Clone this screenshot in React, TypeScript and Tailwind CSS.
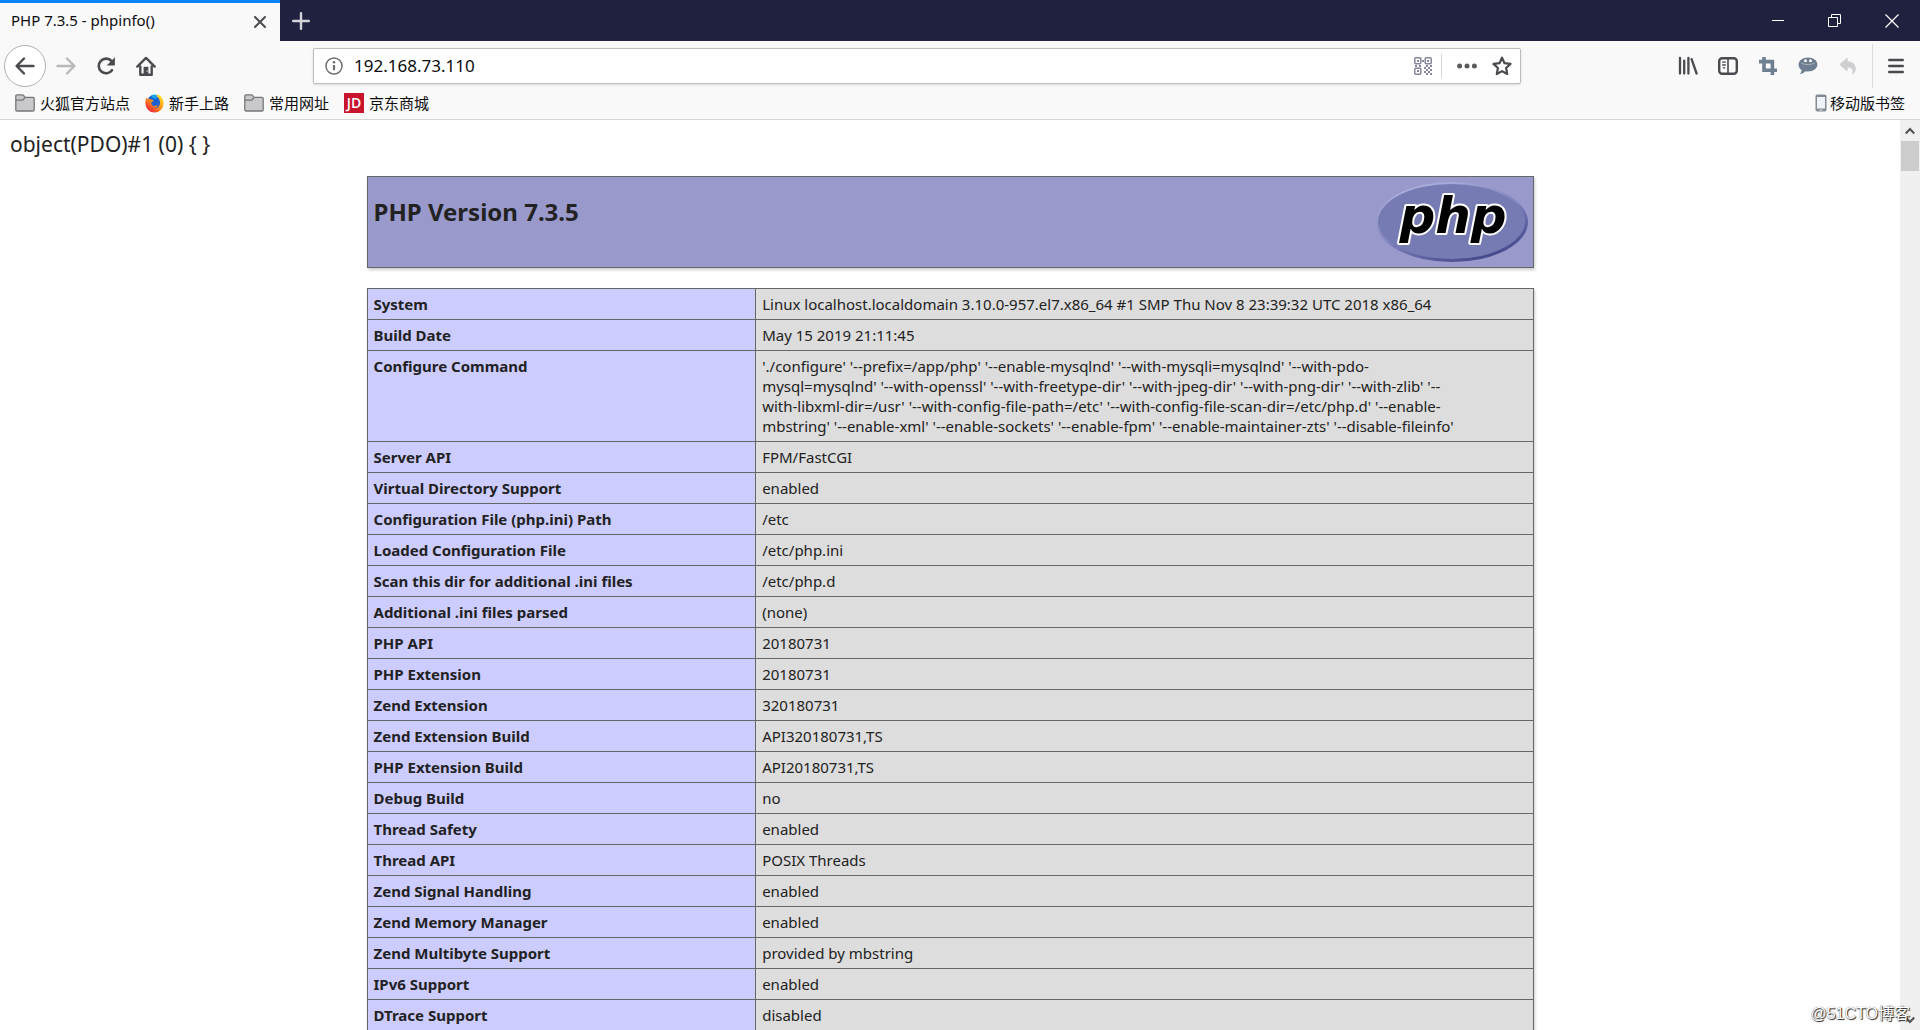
import type { ReactNode } from "react"

type InfoRow = {
  readonly name: string
  readonly value: string
}

const configureCommand = [
  "'./configure' '--prefix=/app/php' '--enable-mysqlnd' '--with-mysqli=mysqlnd' '--with-pdo-",
  "mysql=mysqlnd' '--with-openssl' '--with-freetype-dir' '--with-jpeg-dir' '--with-png-dir' '--with-zlib' '--",
  "with-libxml-dir=/usr' '--with-config-file-path=/etc' '--with-config-file-scan-dir=/etc/php.d' '--enable-",
  "mbstring' '--enable-xml' '--enable-sockets' '--enable-fpm' '--enable-maintainer-zts' '--disable-fileinfo'",
].join("\n")

const infoRows: readonly InfoRow[] = [
  {
    name: "System",
    value: "Linux localhost.localdomain 3.10.0-957.el7.x86_64 #1 SMP Thu Nov 8 23:39:32 UTC 2018 x86_64",
  },
  { name: "Build Date", value: "May 15 2019 21:11:45" },
  { name: "Configure Command", value: configureCommand },
  { name: "Server API", value: "FPM/FastCGI" },
  { name: "Virtual Directory Support", value: "enabled" },
  { name: "Configuration File (php.ini) Path", value: "/etc" },
  { name: "Loaded Configuration File", value: "/etc/php.ini" },
  { name: "Scan this dir for additional .ini files", value: "/etc/php.d" },
  { name: "Additional .ini files parsed", value: "(none)" },
  { name: "PHP API", value: "20180731" },
  { name: "PHP Extension", value: "20180731" },
  { name: "Zend Extension", value: "320180731" },
  { name: "Zend Extension Build", value: "API320180731,TS" },
  { name: "PHP Extension Build", value: "API20180731,TS" },
  { name: "Debug Build", value: "no" },
  { name: "Thread Safety", value: "enabled" },
  { name: "Thread API", value: "POSIX Threads" },
  { name: "Zend Signal Handling", value: "enabled" },
  { name: "Zend Memory Manager", value: "enabled" },
  { name: "Zend Multibyte Support", value: "provided by mbstring" },
  { name: "IPv6 Support", value: "enabled" },
  { name: "DTrace Support", value: "disabled" },
]

type IconButtonProps = {
  readonly label: string
  readonly className?: string
  readonly children: ReactNode
}

function IconButton({ label, className = "w-10", children }: IconButtonProps) {
  return (
    <button
      type="button"
      aria-label={label}
      className={`flex h-10 shrink-0 items-center justify-center ${className}`}
    >
      {children}
    </button>
  )
}

function BackIcon() {
  return (
    <svg width="20" height="20" viewBox="0 0 20 20" fill="none" stroke="currentColor" strokeWidth="2.4" strokeLinecap="round" strokeLinejoin="round">
      <path d="M18.5 10H2M9 2.5 1.6 10 9 17.5" />
    </svg>
  )
}

function ForwardIcon() {
  return (
    <svg width="20" height="20" viewBox="0 0 20 20" fill="none" stroke="currentColor" strokeWidth="2.4" strokeLinecap="round" strokeLinejoin="round">
      <path d="M1.5 10H18M11 2.5 18.4 10 11 17.5" />
    </svg>
  )
}

function ReloadIcon() {
  return (
    <svg width="20" height="20" viewBox="0 0 20 20" fill="none" stroke="currentColor" strokeWidth="2.6" strokeLinecap="round">
      <path d="M15.6 5.2A7.3 7.3 0 1 0 16 14.2" />
      <path d="M18.9 1.2v7.6a.6.6 0 0 1-.6.6h-7.6z" fill="currentColor" stroke="none" />
    </svg>
  )
}

function HomeIcon() {
  return (
    <svg width="20" height="20" viewBox="0 0 20 20" fill="none" stroke="currentColor" strokeLinecap="round" strokeLinejoin="round">
      <path d="M1.3 10.6 10 1.9l8.7 8.7" strokeWidth="2.4" />
      <path d="M4.3 10.5v8.2h11.4v-8.2" strokeWidth="2.4" />
      <path d="M7.6 18.5v-7.7h4.8v7.7z" fill="currentColor" stroke="none" />
      <path d="M11 15h.4" stroke="#f9f9fa" strokeWidth="1.2" />
    </svg>
  )
}

function InfoIcon() {
  return (
    <svg width="18" height="18" viewBox="0 0 18 18" fill="none" stroke="currentColor">
      <circle cx="9" cy="9" r="8" strokeWidth="1.5" />
      <path d="M9 8v5.2" strokeWidth="2.2" />
      <circle cx="9" cy="5.2" r="1.3" fill="currentColor" stroke="none" />
    </svg>
  )
}

function QrIcon() {
  return (
    <svg width="18" height="18" viewBox="0 0 18 18" fill="currentColor">
      <g fill="none" stroke="currentColor" strokeWidth="1.5">
        <rect x=".8" y=".8" width="6" height="6" rx="1" />
        <rect x="11.2" y=".8" width="6" height="6" rx="1" />
        <rect x=".8" y="11.2" width="6" height="6" rx="1" />
      </g>
      <path d="M3 3h2v2H3zM13 3h2v2h-2zM3 13h2v2H3zM8 3h2v2H8zM1 8h2v2H1zM5 8h2v2H5zM10 10h2v2h-2zM12 8h2v2h-2zM16 8h2v2h-2zM14 10h2v2h-2zM12 12h2v2h-2zM16 12h2v2h-2zM10 14h2v2h-2zM14 14h2v2h-2zM12 16h2v2h-2zM16 16h2v2h-2z" />
    </svg>
  )
}

function DotsIcon() {
  return (
    <svg width="20" height="6" viewBox="0 0 20 6" fill="currentColor">
      <circle cx="2.6" cy="3" r="2.5" />
      <circle cx="10" cy="3" r="2.5" />
      <circle cx="17.4" cy="3" r="2.5" />
    </svg>
  )
}

function StarIcon() {
  return (
    <svg width="20" height="20" viewBox="0 0 20 20" fill="none" stroke="currentColor" strokeWidth="2.2" strokeLinejoin="round">
      <path d="M10 1.7l2.5 5.5 6 .7-4.4 4.1 1.1 6-5.2-2.9L4.8 18l1.1-6L1.5 7.9l6-.7z" />
    </svg>
  )
}

function LibraryIcon() {
  return (
    <svg width="20" height="20" viewBox="0 0 20 20" fill="none" stroke="currentColor" strokeWidth="2.3" strokeLinecap="round">
      <path d="M2 2v15.500M6.200 4.600v12.900M10.400 2v15.500M13.600 3.200 18.600 17.500" />
    </svg>
  )
}

function SidebarIcon() {
  return (
    <svg width="20" height="18" viewBox="0 0 20 18" fill="none" stroke="currentColor">
      <rect x="1.200" y="1.200" width="17.600" height="15.600" rx="3" strokeWidth="2.400" />
      <path d="M10 2v14" strokeWidth="1.600" />
      <path d="M4.200 5.200h3.600M4.200 8h3.600M4.800 10.800h2.400" strokeWidth="1.300" />
    </svg>
  )
}

function CropIcon() {
  return (
    <svg width="18" height="18" viewBox="0 0 18 18" fill="none" stroke="currentColor" strokeWidth="3.600">
      <path d="M5 0v13.200H18M0 4.600h13.400V18" />
    </svg>
  )
}

function ChatIcon() {
  return (
    <svg width="20" height="18" viewBox="0 0 20 18">
      <path
        d="M10 .6c5.300 0 9.400 3 9.400 7s-4.100 7-9.400 7c-.9 0-1.800-.1-2.600-.3-1.500 1.600-3.400 2.700-5.600 2.900 1.100-1.100 1.700-2.500 1.800-4.100C1.700 11.900.6 9.900.6 7.600c0-4 4.100-7 9.400-7z"
        fill="currentColor"
      />
      <circle cx="7.500" cy="3.800" r="1.500" fill="#f9f9fa" />
      <circle cx="12.500" cy="3.800" r="1.500" fill="#f9f9fa" />
      <path d="M3.500 6.200c3.500 2 9.500 2 13 0" stroke="#a7b1bd" fill="none" />
    </svg>
  )
}

function UndoIcon() {
  return (
    <svg width="18" height="18" viewBox="0 0 18 18" fill="currentColor">
      <path d="M7.800.9c.4-.3.800-.1.800.4v3c5.400.4 8.200 3.400 8.200 7.300 0 2.600-1.200 4.600-3.200 5.700-.500.300-.900-.1-.600-.6 1.800-3.400.3-6-4.400-6.200v3c0 .5-.4.700-.8.400L.800 8.100c-.4-.300-.4-.700 0-1z" />
    </svg>
  )
}

function MenuIcon() {
  return (
    <svg width="16" height="16" viewBox="0 0 16 16" stroke="currentColor" strokeWidth="2.400" strokeLinecap="round">
      <path d="M1.200 2h13.600M1.200 8h13.600M1.200 14h13.600" />
    </svg>
  )
}

function FolderIcon() {
  return (
    <svg width="20" height="18" viewBox="0 0 20 18" fill="#c9c9cb" stroke="#77777a" strokeWidth="1.300" strokeLinejoin="round">
      <path d="M.8 15.800V2c0-.7.500-1.200 1.200-1.200h5.300c.5 0 .9.200 1.200.6L10 3.400h8c.700 0 1.200.5 1.200 1.200v11.200c0 .700-.5 1.200-1.200 1.200H2c-.700 0-1.200-.5-1.200-1.200z" />
      <path d="M1 6.200h6.600L10 3.600" fill="none" />
    </svg>
  )
}

function FirefoxIcon() {
  return (
    <svg width="19" height="19" viewBox="0 0 19 19">
      <defs>
        <linearGradient id="fox-flame" x1="0.850" y1="0.100" x2="0.200" y2="0.950">
          <stop offset="0" stopColor="#ffe226" />
          <stop offset="0.450" stopColor="#ff9a16" />
          <stop offset="1" stopColor="#f0203c" />
        </linearGradient>
      </defs>
      <circle cx="9.300" cy="8.200" r="7.200" fill="#1b5fd0" />
      <path d="M6 1.500a7 7 0 0 1 7.500.6L11 5 7.500 4z" fill="#15a4e8" />
      <path
        d="M1.400 3.200c.2.800.6 1.300 1.100 1.700 1.300-.5 2.500-.3 3.500.5 1.200 0 2.300.6 2.600 1.300-.5.800-1.300 1-2.100 1.300-.5 1.700.2 3.300 1.800 3.900 1.700.5 2.700-.8 4.400-.2-.8 1.500-2.400 2.200-4 2.200 3.500 1 6.300-1.500 6.300-5.100 0-2.600-1.300-4.700-2.900-6.200C11.600 1.800 12 .9 12.400.2c3.700 1.500 6.200 4.900 6.200 9A9.100 9.100 0 0 1 .400 9.500c0-2.300.3-4.600 1-6.300z"
        fill="url(#fox-flame)"
      />
    </svg>
  )
}

function JdIcon() {
  return (
    <span className="flex h-5 w-5 items-center justify-center bg-[#c8142c] font-['Open_Sans',sans-serif] text-[14px] leading-5 font-semibold text-white">
      JD
    </span>
  )
}

function PhoneIcon() {
  return (
    <svg width="12" height="18" viewBox="0 0 12 18">
      <rect x=".5" y=".5" width="11" height="17" rx="1.800" fill="#858b94" />
      <rect x="2" y="3" width="8" height="11.500" fill="#eef3f9" />
      <path d="M4.500 16.100h3" stroke="#d5dae0" />
    </svg>
  )
}

function PhpLogo() {
  return (
    <svg width="152" height="80" viewBox="0 0 152 80" role="img" aria-label="PHP logo" className="shrink-0">
      <defs>
        <linearGradient id="php-rim" x1="0.200" y1="0" x2="0.800" y2="1">
          <stop offset="0" stopColor="#b4b6e0" />
          <stop offset="0.500" stopColor="#8083bd" />
          <stop offset="1" stopColor="#3c3f83" />
        </linearGradient>
      </defs>
      <ellipse cx="76" cy="40" rx="76" ry="40" fill="url(#php-rim)" />
      <ellipse cx="75.500" cy="39.500" rx="73.500" ry="37.500" fill="#777bb3" />
      <text
        x="77"
        y="51"
        textAnchor="middle"
        fill="#000"
        stroke="#fff"
        strokeWidth="4"
        strokeLinejoin="round"
        paintOrder="stroke"
        className="font-['DejaVu_Sans',sans-serif] text-[50px] font-bold italic"
      >
        php
      </text>
    </svg>
  )
}

function TitleBar() {
  return (
    <header className="flex h-[41px] shrink-0 items-stretch bg-[#20213f]">
      <div className="flex w-[280px] items-center justify-between border-t-3 border-[#0a84ff] bg-[#f9f9fa] pr-2 pb-1 pl-[11px]">
        <span className="text-[15px] leading-5 text-[#0c0c0d]">PHP 7.3.5 - phpinfo()</span>
        <button type="button" aria-label="Close tab" className="mt-1 flex h-6 w-6 items-center justify-center text-[#4a4a4f]">
          <svg width="12" height="12" viewBox="0 0 12 12" stroke="currentColor" strokeWidth="2" strokeLinecap="round">
            <path d="M1 1l10 10M11 1 1 11" />
          </svg>
        </button>
      </div>
      <button type="button" aria-label="New tab" className="flex w-[42px] items-center justify-center text-[#d3d3dc]">
        <svg width="18" height="18" viewBox="0 0 18 18" stroke="currentColor" strokeWidth="2.400" strokeLinecap="round">
          <path d="M9 1.200v15.600M1.200 9h15.600" />
        </svg>
      </button>
      <div className="ml-auto flex text-white">
        <button type="button" aria-label="Minimize" className="flex w-[57px] items-center justify-center">
          <svg width="12" height="12" viewBox="0 0 12 12" stroke="currentColor">
            <path d="M0 5.500h12" />
          </svg>
        </button>
        <button type="button" aria-label="Restore" className="flex w-[57px] items-center justify-center">
          <svg width="13" height="13" viewBox="0 0 13 13" fill="none" stroke="currentColor">
            <path d="M.500 3.500h9v9h-9zM3.500 3.500v-3h9v9h-3" />
          </svg>
        </button>
        <button type="button" aria-label="Close" className="flex w-[57px] items-center justify-center">
          <svg width="14" height="14" viewBox="0 0 14 14" stroke="currentColor" strokeWidth="1.200">
            <path d="M.5.500l13 13M13.500.500l-13 13" />
          </svg>
        </button>
      </div>
    </header>
  )
}

function NavBar() {
  return (
    <nav aria-label="Navigation" className="flex h-[50px] shrink-0 items-center pr-1 pl-1 text-[#4a4a4f]">
      <button
        type="button"
        aria-label="Back"
        className="flex h-[42px] w-[42px] shrink-0 items-center justify-center rounded-full border border-[#b1b1b3] bg-white"
      >
        <BackIcon />
      </button>
      <IconButton label="Forward" className="w-10 text-[#b9b9bb]">
        <ForwardIcon />
      </IconButton>
      <IconButton label="Reload">
        <ReloadIcon />
      </IconButton>
      <IconButton label="Home">
        <HomeIcon />
      </IconButton>

      <div className="flex flex-1 px-[147px]">
        <div className="flex h-9 flex-1 items-center rounded-xs border border-[#bdbdbf] bg-white shadow-sm">
          <button type="button" aria-label="Site information" className="flex w-10 items-center justify-center text-[#6f6f72]">
            <InfoIcon />
          </button>
          <input
            type="text"
            aria-label="Address"
            defaultValue="192.168.73.110"
            className="min-w-0 flex-1 bg-transparent text-[17px] leading-6 text-[#0c0c0d] outline-none"
          />
          <IconButton label="QR code" className="w-9 text-[#85869c]">
            <QrIcon />
          </IconButton>
          <span className="h-6 w-px bg-[#d7d7db]" />
          <IconButton label="Page actions" className="ml-2 w-[34px] text-[#5a5a5e]">
            <DotsIcon />
          </IconButton>
          <IconButton label="Bookmark this page" className="w-9 text-[#4a4a4f]">
            <StarIcon />
          </IconButton>
        </div>
      </div>

      <IconButton label="Library">
        <LibraryIcon />
      </IconButton>
      <IconButton label="Sidebars">
        <SidebarIcon />
      </IconButton>
      <IconButton label="Screenshot" className="w-10 text-[#6d7f90]">
        <CropIcon />
      </IconButton>
      <IconButton label="Chat" className="w-10 text-[#6d7f90]">
        <ChatIcon />
      </IconButton>
      <IconButton label="Undo close tab" className="w-10 text-[#cfcfd2]">
        <UndoIcon />
      </IconButton>
      <span className="mr-[3px] ml-1 h-11 w-px shrink-0 bg-[#dcdcde]" />
      <IconButton label="Menu">
        <MenuIcon />
      </IconButton>
    </nav>
  )
}

type BookmarkProps = {
  readonly icon: ReactNode
  readonly label: string
}

function Bookmark({ icon, label }: BookmarkProps) {
  return (
    <a href="#" className="flex items-center gap-[5px] whitespace-nowrap">
      {icon}
      {label}
    </a>
  )
}

function BookmarksBar() {
  return (
    <div className="flex h-[29px] shrink-0 items-center gap-[15px] border-b border-[#d5d5d7] pr-[15px] pb-1 pl-[15px] text-[15px] leading-5 text-[#0c0c0d]">
      <Bookmark icon={<FolderIcon />} label="火狐官方站点" />
      <Bookmark icon={<FirefoxIcon />} label="新手上路" />
      <Bookmark icon={<FolderIcon />} label="常用网址" />
      <Bookmark icon={<JdIcon />} label="京东商城" />
      <a href="#" className="ml-auto flex items-center gap-[3px] whitespace-nowrap">
        <PhoneIcon />
        移动版书签
      </a>
    </div>
  )
}

function ScrollBar() {
  return (
    <div className="flex w-5 shrink-0 flex-col items-center bg-[#f0f0f0] text-[#505050]">
      <button type="button" aria-label="Scroll up" className="flex h-[21px] w-full items-center justify-center">
        <svg width="10" height="8" viewBox="0 0 10 8" fill="none" stroke="currentColor" strokeWidth="2">
          <path d="M.800 6.500 5 2l4.200 4.500" />
        </svg>
      </button>
      <div className="h-[30px] w-[18px] bg-[#cdcdcd]" />
      <button type="button" aria-label="Scroll down" className="mt-auto flex h-[21px] w-full items-center justify-center">
        <svg width="10" height="8" viewBox="0 0 10 8" fill="none" stroke="currentColor" strokeWidth="2">
          <path d="M.800 1.500 5 6l4.200-4.500" />
        </svg>
      </button>
    </div>
  )
}

function PhpInfoPage() {
  return (
    <main className="min-w-0 flex-1 overflow-hidden bg-white px-[10px] pt-[11px] text-[#222222]">
      <p className="text-[21px] leading-[26px]">{"object(PDO)#1 (0) { }"}</p>

      <div className="mx-auto mt-[19px] w-full max-w-[1167px]">
        <div className="flex items-start justify-between border border-[#666666] bg-[#9999cc] p-[5px] shadow-[1px_2px_3px_#cccccc]">
          <h1 className="mt-[14px] pl-px text-[24px] leading-8 font-bold">PHP Version 7.3.5</h1>
          <PhpLogo />
        </div>

        <table className="mt-5 w-full table-fixed border-collapse text-left text-[15px] leading-5 shadow-[1px_2px_3px_#cccccc]">
          <colgroup>
            <col className="w-1/3" />
            <col className="w-2/3" />
          </colgroup>
          <tbody>
            {infoRows.map((row) => (
              <tr key={row.name} className="align-top">
                <th scope="row" className="border border-[#666666] bg-[#ccccff] px-[6px] py-[5px] font-bold">
                  {row.name}
                </th>
                <td className="border border-[#666666] bg-[#dddddd] px-[6px] py-[5px] whitespace-pre-line">
                  {row.value}
                </td>
              </tr>
            ))}
          </tbody>
        </table>
      </div>
    </main>
  )
}

export default function App() {
  return (
    <div className="relative flex h-screen flex-col overflow-hidden bg-[#f9f9fa] font-['Noto_Sans','Noto_Sans_CJK_SC',sans-serif]">
      <TitleBar />
      <NavBar />
      <BookmarksBar />
      <div className="flex min-h-0 flex-1">
        <PhpInfoPage />
        <ScrollBar />
      </div>
      <span className="pointer-events-none absolute right-[10px] bottom-1 font-['Liberation_Sans','Noto_Sans_CJK_SC',sans-serif] text-[16px] leading-6 text-white [text-shadow:1px_1px_1px_#222,0_0_1px_#555]">
        @51CTO博客
      </span>
    </div>
  )
}
